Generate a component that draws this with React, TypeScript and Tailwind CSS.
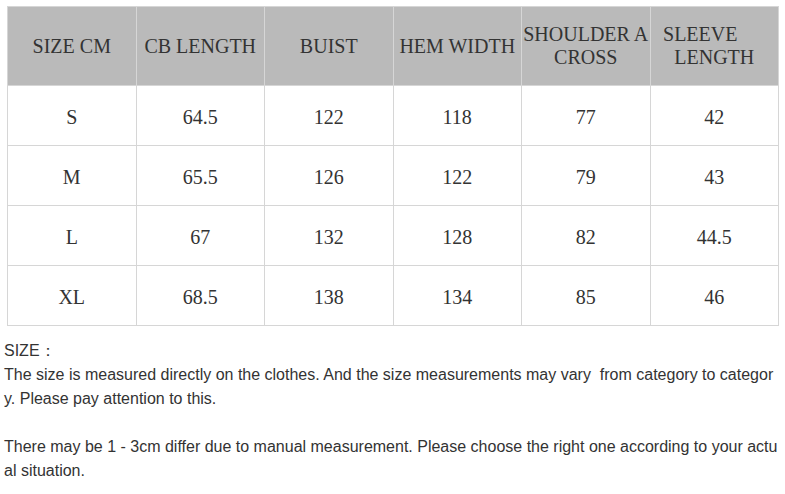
const headers = ["SIZE CM", "CB LENGTH", "BUIST", "HEM WIDTH", "SHOULDER ACROSS", "SLEEVE LENGTH"]

const rows = [
  ["S", "64.5", "122", "118", "77", "42"],
  ["M", "65.5", "126", "122", "79", "43"],
  ["L", "67", "132", "128", "82", "44.5"],
  ["XL", "68.5", "138", "134", "85", "46"],
]

function HeaderText({ h }: { h: string }) {
  if (h === "SLEEVE LENGTH") {
    return (
      <>
        <span className="pr-[28px]">SLEEVE</span>
        <br />
        LENGTH
      </>
    )
  }
  if (h === "SHOULDER ACROSS") {
    return (
      <span className="whitespace-nowrap">
        SHOULDER A
        <br />
        CROSS
      </span>
    )
  }
  return <>{h}</>
}

export default function App() {
  return (
    <div className="w-[785px] h-[494px] bg-white px-[4px] pt-[6px] overflow-hidden">
      <table
        className="table-fixed border-collapse w-[772px] ml-[3px] text-[#333] text-[20px] leading-[23px]"
        style={{ fontFamily: '"Liberation Serif", "Times New Roman", serif' }}
      >
        <thead>
          <tr className="h-[79px] bg-[#bababa]">
            {headers.map((h) => (
              <th key={h} className="border border-[#d6d6d6] font-normal text-center align-middle px-0">
                <HeaderText h={h} />
              </th>
            ))}
          </tr>
        </thead>
        <tbody>
          {rows.map((r) => (
            <tr key={r[0]} className="h-[60px]">
              {r.map((c, i) => (
                <td key={i} className="border border-[#d6d6d6] text-center align-middle pt-[4px]">
                  {c}
                </td>
              ))}
            </tr>
          ))}
        </tbody>
      </table>

      <div
        className="mt-[13px] w-[776px] text-[16px] leading-[24px] text-[#333] break-all"
        style={{ fontFamily: '"Liberation Sans", Arial, sans-serif' }}
      >
        <p>SIZE：</p>
        <p>
          The size is measured directly on the clothes. And the size measurements may vary&nbsp; from category to
          category. Please pay attention to this.
        </p>
        <p className="h-[24px]"></p>
        <p>
          There may be 1 - 3cm differ due to manual measurement. Please choose the right one according to your actual
          situation.
        </p>
      </div>
    </div>
  )
}
